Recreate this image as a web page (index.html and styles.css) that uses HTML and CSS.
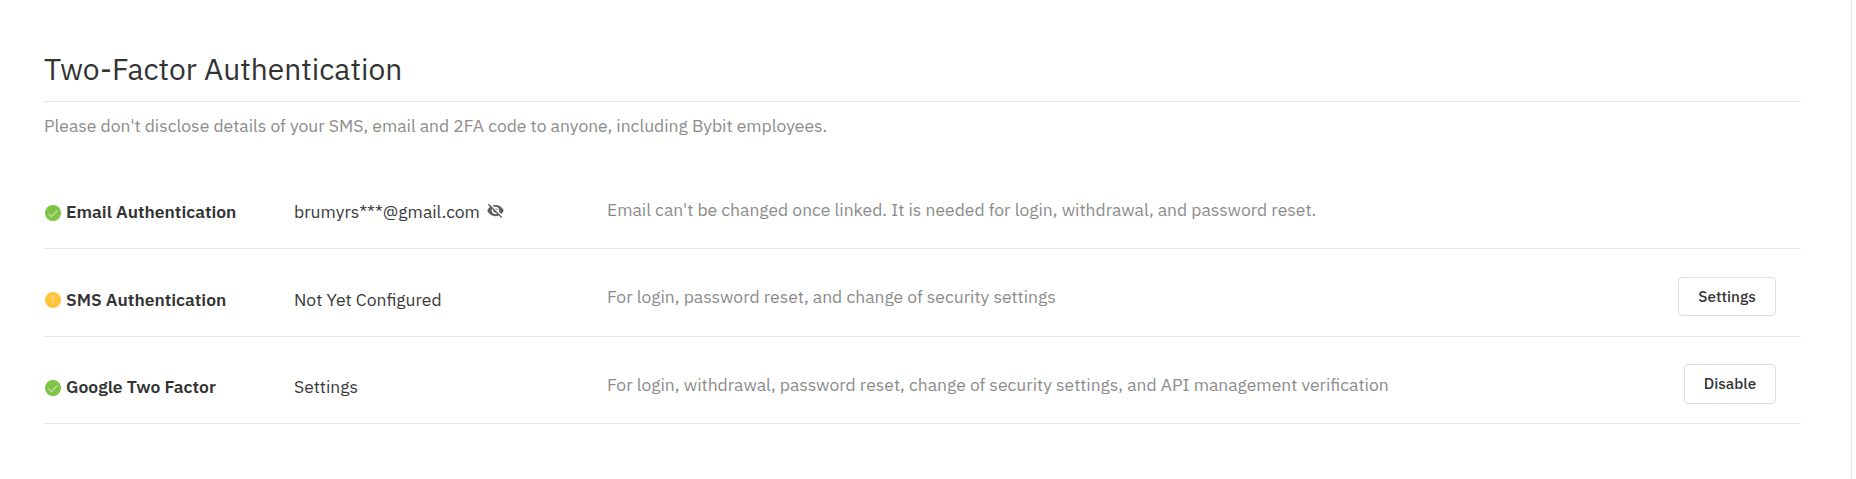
FILE: index.html
```html
<!DOCTYPE html>
<html lang="en">
<head>
    <meta charset="UTF-8">
    <meta name="viewport" content="width=device-width, initial-scale=1.0">
    <title>Two-Factor Authentication</title>
    <link rel="stylesheet" href="styles.css">
</head>
<body>
    <div class="panel">
        <h1 class="panel-title">Two-Factor Authentication</h1>
        <p class="panel-note">Please don't disclose details of your SMS, email and 2FA code to anyone, including Bybit employees.</p>

        <div class="auth-list">
            <div class="auth-row">
                <div class="auth-name">
                    <svg class="status-icon" viewBox="0 0 16 16">
                        <circle cx="8" cy="8" r="8" fill="#7ec544"/>
                        <path d="M3.4 8.6l3 3 6.2-6.2" fill="none" stroke="#c9dcc4" stroke-width="1.2"/>
                    </svg>
                    <span>Email Authentication</span>
                </div>
                <div class="auth-value">
                    <span>brumyrs***@gmail.com</span>
                    <svg class="eye-icon" viewBox="1 2 22 20">
                        <path fill="#5f5f5f" d="M12 7c2.76 0 5 2.24 5 5 0 .65-.13 1.26-.36 1.83l2.92 2.92c1.51-1.26 2.7-2.89 3.43-4.75-1.73-4.39-6-7.5-11-7.5-1.4 0-2.74.25-3.98.7l2.16 2.16C10.74 7.13 11.35 7 12 7zM2 4.27l2.28 2.28.46.46C3.08 8.3 1.78 10.02 1 12c1.73 4.39 6 7.5 11 7.5 1.55 0 3.03-.3 4.38-.84l.42.42L19.73 22 21 20.73 3.27 3 2 4.27zM7.53 9.8l1.55 1.55c-.05.21-.08.43-.08.65 0 1.66 1.34 3 3 3 .22 0 .44-.03.65-.08l1.55 1.55c-.67.33-1.41.53-2.2.53-2.76 0-5-2.24-5-5 0-.79.2-1.53.53-2.2zm4.31-.78l3.15 3.15.02-.16c0-1.66-1.34-3-3-3l-.17.01z"/>
                    </svg>
                </div>
                <div class="auth-desc">Email can't be changed once linked. It is needed for login, withdrawal, and password reset.</div>
            </div>

            <div class="auth-row">
                <div class="auth-name">
                    <svg class="status-icon icon-warning" viewBox="0 0 16 16">
                        <circle cx="8" cy="8" r="8" fill="#ffc53a"/>
                        <path d="M8 3.4v6M8 11v1.6" fill="none" stroke="#ffe0b0" stroke-width="1.5"/>
                    </svg>
                    <span>SMS Authentication</span>
                </div>
                <div class="auth-value">Not Yet Configured</div>
                <div class="auth-desc">For login, password reset, and change of security settings</div>
                <button class="auth-button btn-settings">Settings</button>
            </div>

            <div class="auth-row">
                <div class="auth-name">
                    <svg class="status-icon" viewBox="0 0 16 16">
                        <circle cx="8" cy="8" r="8" fill="#7ec544"/>
                        <path d="M3.4 8.6l3 3 6.2-6.2" fill="none" stroke="#c9dcc4" stroke-width="1.2"/>
                    </svg>
                    <span>Google Two Factor</span>
                </div>
                <div class="auth-value">Settings</div>
                <div class="auth-desc">For login, withdrawal, password reset, change of security settings, and API management verification</div>
                <button class="auth-button btn-disable">Disable</button>
            </div>
        </div>
    </div>
</body>
</html>
```

FILE: styles.css
```css
* { margin: 0; padding: 0; box-sizing: border-box; }
body {
    font-family: 'IBM Plex Sans', Roboto, sans-serif;
    font-size: 17.5px;
    line-height: 26px;
    color: #333;
    background: #fefefe;
}
.panel {
    width: 1852px;
    height: 479px;
    padding: 50px 50px 0 44px;
    border-right: 1px solid #e6e6e6;
    background: #fff;
}
.panel-title {
    height: 52px;
    border-bottom: 1px solid #e8e8e8;
    font-size: 30px;
    line-height: 37px;
    font-weight: 400;
}
.panel-note {
    height: 59px;
    padding-top: 11px;
    color: #8c8c8c;
}
.auth-row {
    display: grid;
    grid-template-columns: 250px 312px 1fr auto;
    height: 88px;
    padding-right: 25px;
    border-bottom: 1px solid #e8e8e8;
    align-items: start;
    white-space: nowrap;
}
.auth-row:last-child { height: 87px; }
.auth-name {
    display: flex;
    padding: 38px 0 0 1px;
    font-weight: 600;
}
.status-icon {
    width: 16px;
    height: 16px;
    margin: 6px 5px 0 0;
}
.icon-warning { margin-top: 5px; }
.auth-value {
    display: flex;
    padding-top: 38px;
    color: #3a3a3a;
}
.eye-icon {
    width: 17px;
    height: 15px;
    margin: 4px 0 0 7px;
}
.auth-desc {
    padding: 36px 0 0 1px;
    color: #8c8c8c;
}
.auth-row + .auth-row .auth-desc { padding-top: 35px; }
.auth-row:last-child .auth-name,
.auth-row:last-child .auth-value { padding-top: 37px; }
.auth-button {
    height: 39px;
    margin-top: 28px;
    padding-bottom: 2px;
    border: 1px solid #dcdde0;
    border-radius: 4px;
    background: #fff;
    color: #333;
    font-family: inherit;
    font-size: 15.3px;
    line-height: 22px;
    font-weight: 500;
}
.btn-settings { width: 98px; }
.btn-disable { width: 92px; height: 40px; margin-top: 27px; }
```
